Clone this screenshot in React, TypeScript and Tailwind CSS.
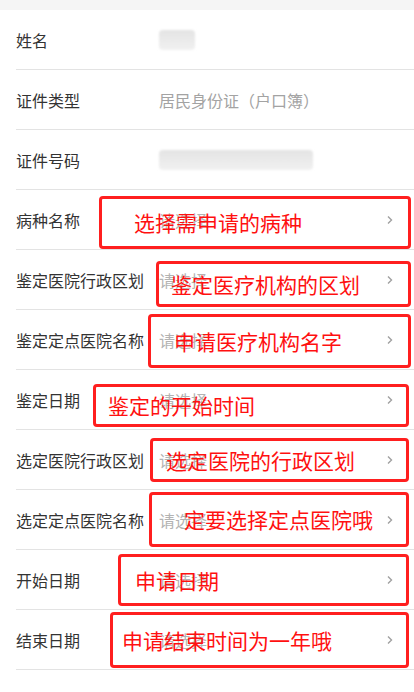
type Note = {
  text: string
  left: number
  top: number
  width: number
  height: number
  pad: number
}

type Field = {
  label: string
  value?: string
  blur?: number
  placeholder?: boolean
  note?: Note
}

const fields: Field[] = [
  { label: "姓名", blur: 36 },
  { label: "证件类型", value: "居民身份证（户口簿）" },
  { label: "证件号码", blur: 154 },
  {
    label: "病种名称",
    placeholder: true,
    note: { text: "选择需申请的病种", left: 99, top: 6, width: 312, height: 53, pad: 32 },
  },
  {
    label: "鉴定医院行政区划",
    placeholder: true,
    note: { text: "鉴定医疗机构的区划", left: 156, top: 11, width: 255, height: 46, pad: 12 },
  },
  {
    label: "鉴定定点医院名称",
    placeholder: true,
    note: { text: "申请医疗机构名字", left: 148, top: 4, width: 263, height: 54, pad: 23 },
  },
  {
    label: "鉴定日期",
    placeholder: true,
    note: { text: "鉴定的开始时间", left: 93, top: 14, width: 316, height: 43, pad: 12 },
  },
  {
    label: "选定医院行政区划",
    placeholder: true,
    note: { text: "选定医院的行政区划", left: 150, top: 8, width: 259, height: 44, pad: 13 },
  },
  {
    label: "选定定点医院名称",
    placeholder: true,
    note: { text: "定要选择定点医院哦", left: 149, top: 2, width: 260, height: 55, pad: 32 },
  },
  {
    label: "开始日期",
    placeholder: true,
    note: { text: "申请日期", left: 118, top: 4, width: 291, height: 52, pad: 14 },
  },
  {
    label: "结束日期",
    placeholder: true,
    note: { text: "申请结束时间为一年哦", left: 110, top: 2, width: 299, height: 56, pad: 9 },
  },
]

function Chevron() {
  return (
    <svg width="8" height="10" viewBox="0 0 8 10" fill="none" stroke="#a0a0a0" strokeWidth="1.4">
      <path d="M2 1.5 5.5 5 2 8.5" />
    </svg>
  )
}

function FieldRow({ field }: { field: Field }) {
  return (
    <div className="relative h-[60px] pl-4">
      <div className="flex h-full items-center border-b border-[#e3e3e3] pr-[20px]">
        <span className="w-[143px] shrink-0 text-[16px] text-[#333]">{field.label}</span>
        <div className="flex flex-1 items-center">
          {field.value && <span className="text-[16px] text-[#a3a3a3]">{field.value}</span>}
          {field.blur && (
            <div
              className="h-[20px] rounded-sm bg-gradient-to-b from-[#e4e4e4] to-[#f1f1f1] blur-[1px]"
              style={{ width: field.blur }}
            />
          )}
          {field.placeholder && <span className="text-[16px] text-[#b3b3b3]">请选择</span>}
        </div>
        {field.placeholder && <Chevron />}
      </div>
      {field.note && (
        <div
          className="absolute flex items-center rounded-[4px] border-[3px] border-[#ff1f1f]"
          style={{
            left: field.note.left,
            top: field.note.top,
            width: field.note.width,
            height: field.note.height,
            paddingLeft: field.note.pad,
          }}
        >
          <span className="text-[21px] leading-none text-[#ff1010]">{field.note.text}</span>
        </div>
      )}
    </div>
  )
}

export default function App() {
  return (
    <div
      className="h-[692px] w-[414px] overflow-hidden bg-white"
      style={{ fontFamily: '"Noto Sans CJK SC", "Noto Sans", sans-serif' }}
    >
      <div className="h-[10px] bg-[#f5f5f5]" />
      {fields.map((f) => (
        <FieldRow key={f.label} field={f} />
      ))}
    </div>
  )
}
